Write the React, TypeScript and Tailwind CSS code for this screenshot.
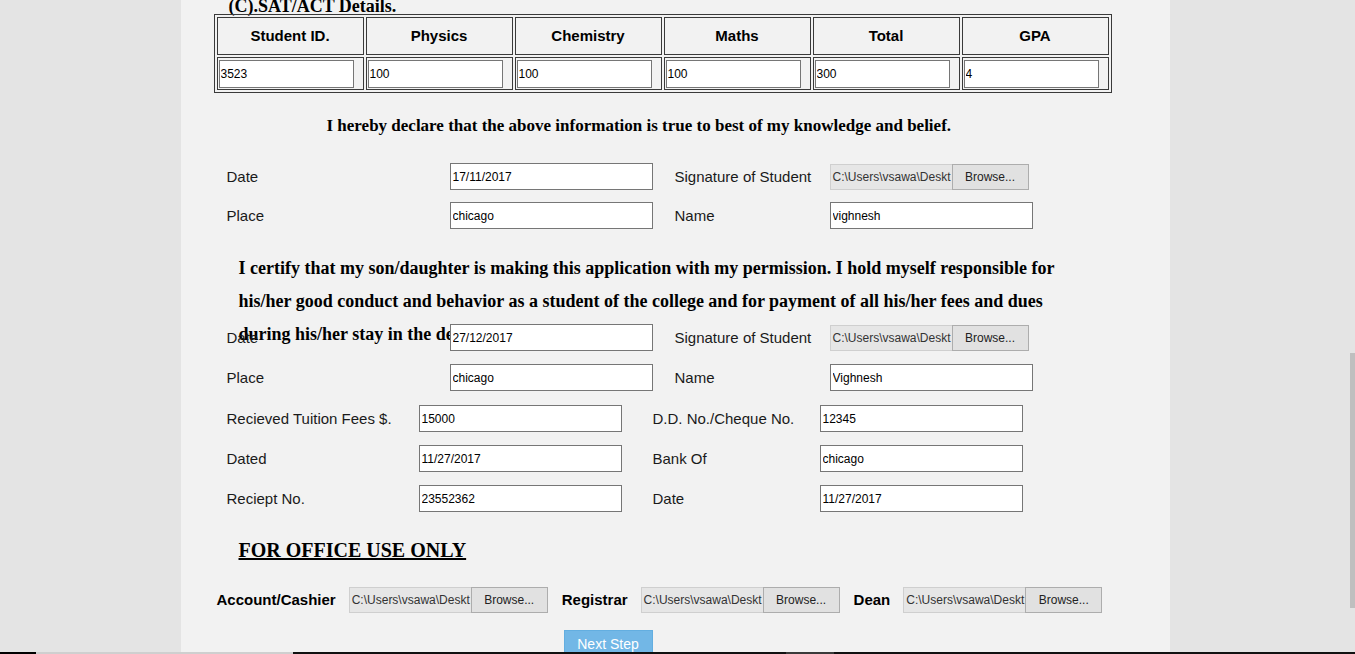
const sans = "font-['Liberation_Sans',Arial,sans-serif]";
const serif = "font-['Liberation_Serif','Times_New_Roman',serif]";

const SUBJECTS = ["Student ID.", "Physics", "Chemistry", "Maths", "Total", "GPA"];
const SCORES = ["3523", "100", "100", "100", "300", "4"];

function Field({ value }: { value: string }) {
  return (
    <input
      readOnly
      value={value}
      className={`${sans} h-[27px] w-[203px] border border-[#767676] bg-white pl-[2px] text-[12px] text-black outline-none`}
    />
  );
}

function FileBox() {
  return (
    <div className={`${sans} flex h-[26px] w-[199px] text-[12px] font-normal`}>
      <div className="flex w-[122px] items-center overflow-hidden whitespace-nowrap border border-r-0 border-[#cfcfcf] bg-[#e6e6e6] pl-[2px] text-[#333]">
        C:\Users\vsawa\Deskt
      </div>
      <div className="flex w-[77px] items-center justify-center border border-[#adadad] bg-[#e1e1e1] text-[#222]">
        Browse...
      </div>
    </div>
  );
}

function Label({ text, w }: { text: string; w: string }) {
  return <div className={`${sans} ${w} pt-[1px] text-[15px] text-[#1a1a1a]`}>{text}</div>;
}

export default function App() {
  return (
    <div className="flex h-[654px] w-full flex-col overflow-hidden bg-[#e4e4e4]">
      <div className="flex h-[652px] overflow-hidden">
        <div className="flex flex-1 justify-center">
          {/* centre panel */}
          <div className="flex w-[989px] flex-col bg-[#f2f2f2] pl-[33px]">
            <h2 className={`${serif} -mt-[4px] ml-[15px] h-[20px] text-[18px] font-bold leading-[20px] text-black`}>
              (C).SAT/ACT Details.
            </h2>

            <table className="-mt-[2px] w-[898px] border-separate border-spacing-[2px] border border-[#3a3a3a]">
              <tbody>
                <tr>
                  {SUBJECTS.map((s) => (
                    <th key={s} className="border border-[#3a3a3a] p-0">
                      <div className={`${sans} flex h-[36px] w-[145px] items-center justify-center text-[15px] font-bold text-black`}>
                        {s}
                      </div>
                    </th>
                  ))}
                </tr>
                <tr>
                  {SCORES.map((v, i) => (
                    <td key={i} className="border border-[#3a3a3a] p-0">
                      <div className="flex h-[31px] w-[145px] items-center pl-[1px]">
                        <input
                          readOnly
                          value={v}
                          className={`${sans} h-[28px] w-[135px] border border-[#767676] bg-white pl-[1px] text-[12px] text-black outline-none`}
                        />
                      </div>
                    </td>
                  ))}
                </tr>
              </tbody>
            </table>

            <p className={`${serif} mt-[23px] ml-[113px] text-[17px] font-bold leading-[20px] text-black`}>
              I hereby declare that the above information is true to best of my knowledge and belief.
            </p>

            {/* student declaration */}
            <div className="mt-[27px] ml-[13px] flex flex-col gap-[12px]">
              <div className="flex h-[27px] items-center">
                <Label text="Date" w="w-[223px]" />
                <Field value="17/11/2017" />
                <Label text="Signature of Student" w="ml-[22px] w-[155px]" />
                <FileBox />
              </div>
              <div className="flex h-[27px] items-center">
                <Label text="Place" w="w-[223px]" />
                <Field value="chicago" />
                <Label text="Name" w="ml-[22px] w-[155px]" />
                <Field value="vighnesh" />
              </div>
            </div>

            <div className="mt-[23px] ml-[25px] h-[72px]">
              <p className={`${serif} w-[835px] text-[18px] font-bold leading-[33px] text-black`}>
                I certify that my son/daughter is making this application with my permission. I hold myself
                responsible for his/her good conduct and behavior as a student of the college and for payment of
                all his/her fees and dues during his/her stay in the department.
              </p>
            </div>

            {/* parent declaration */}
            <div className="ml-[13px] flex flex-col gap-[13px]">
              <div className="flex h-[27px] items-center">
                <Label text="Date" w="w-[223px]" />
                <Field value="27/12/2017" />
                <Label text="Signature of Student" w="ml-[22px] w-[155px]" />
                <FileBox />
              </div>
              <div className="flex h-[27px] items-center">
                <Label text="Place" w="w-[223px]" />
                <Field value="chicago" />
                <Label text="Name" w="ml-[22px] w-[155px]" />
                <Field value="Vighnesh" />
              </div>
            </div>

            {/* fees */}
            <div className="mt-[14px] ml-[13px] flex flex-col gap-[13px]">
              <div className="flex h-[27px] items-center">
                <Label text="Recieved Tuition Fees $." w="w-[192px]" />
                <Field value="15000" />
                <Label text="D.D. No./Cheque No." w="ml-[31px] w-[167px]" />
                <Field value="12345" />
              </div>
              <div className="flex h-[27px] items-center">
                <Label text="Dated" w="w-[192px]" />
                <Field value="11/27/2017" />
                <Label text="Bank Of" w="ml-[31px] w-[167px]" />
                <Field value="chicago" />
              </div>
              <div className="flex h-[27px] items-center">
                <Label text="Reciept No." w="w-[192px]" />
                <Field value="23552362" />
                <Label text="Date" w="ml-[31px] w-[167px]" />
                <Field value="11/27/2017" />
              </div>
            </div>

            <h3 className={`${serif} mt-[26px] ml-[25px] text-[20px] font-bold leading-[24px] text-black underline`}>
              FOR OFFICE USE ONLY
            </h3>

            <div className={`${sans} mt-[25px] ml-[3px] flex h-[26px] items-center text-[15px] font-bold text-black`}>
              <span>Account/Cashier</span>
              <div className="ml-[13px]"><FileBox /></div>
              <span className="ml-[14px]">Registrar</span>
              <div className="ml-[13px]"><FileBox /></div>
              <span className="ml-[14px]">Dean</span>
              <div className="ml-[13px]"><FileBox /></div>
            </div>

            <div className="mt-[17px] ml-[350px]">
              <button className={`${sans} h-[28px] w-[89px] border border-[#63aee0] bg-[#72b7e6] text-[14px] text-white`}>
                Next Step
              </button>
            </div>
          </div>
        </div>

        {/* scrollbar */}
        <div className="w-[5px]">
          <div className="mt-[353px] h-[255px] bg-[#bfbfbf]" />
        </div>
      </div>

      {/* taskbar edge */}
      <div className="flex h-[2px]">
        <div className="w-[36px] bg-black" />
        <div className="w-[257px] bg-[#cfcfcf]" />
        <div className="w-[493px] bg-[#111]" />
        <div className="w-[48px] bg-[#3a3a3a]" />
        <div className="flex-1 bg-[#111]" />
      </div>
    </div>
  );
}
